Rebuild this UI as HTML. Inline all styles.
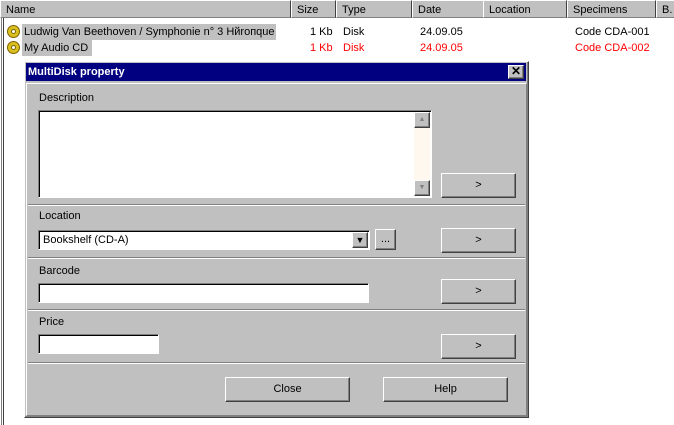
<!DOCTYPE html>
<html><head><meta charset="utf-8"><style>
*{margin:0;padding:0;box-sizing:border-box}
body{width:674px;height:425px;overflow:hidden;background:#fff;font-family:"Liberation Sans",sans-serif;font-size:11px;color:#000;position:relative}
.a{position:absolute}
.hd{position:absolute;top:0;height:18px;background:#c0c0c0;border-top:1px solid #fff;border-left:1px solid #fff;border-right:1px solid #404040;border-bottom:1px solid #808080;padding:3px 0 0 5px;white-space:nowrap;overflow:hidden}
.raised{background:#c0c0c0;border-top:1px solid #fff;border-left:1px solid #fff;border-right:1px solid #404040;border-bottom:1px solid #404040;box-shadow:inset -1px -1px 0 #808080}
.sunk{background:#fff;border-top:1px solid #808080;border-left:1px solid #808080;border-right:1px solid #fff;border-bottom:1px solid #fff;box-shadow:inset 1px 1px 0 #000}
.btn{position:absolute;text-align:center}
.sep{position:absolute;left:28px;width:497px;height:2px;border-top:1px solid #808080;border-bottom:1px solid #fff}
.red{color:#f00}
.cd{position:absolute;width:13px;height:13px;border-radius:50%;background:#d8c020;border:1px solid #806000}
.cd:after{content:"";position:absolute;left:3px;top:3px;width:5px;height:5px;border-radius:50%;background:#fff;border:1px solid #806000;box-sizing:border-box}
</style></head><body>
<div class="hd" style="left:0;width:291px">Name</div>
<div class="hd" style="left:291px;width:45px">Size</div>
<div class="hd" style="left:336px;width:76px">Type</div>
<div class="hd" style="left:412px;width:83px">Date</div>
<div class="hd" style="left:483px;width:84px">Location</div>
<div class="hd" style="left:567px;width:89px">Specimens</div>
<div class="hd" style="left:656px;width:30px">B.</div>
<div class="a" style="left:3px;top:18px;width:1px;height:407px;background:#404040"></div>
<div class="a" style="left:1px;top:18px;width:1px;height:407px;background:#808080"></div>

<div class="cd" style="left:7px;top:25px"></div>
<div class="a" style="left:22px;top:24px;width:254px;height:16px;background:#c0c0c0;padding:2px 0 0 2px">Ludwig Van Beethoven / Symphonie n° 3 Hйroпque</div>
<div class="a" style="left:310px;top:26px">1 Kb</div>
<div class="a" style="left:343px;top:26px">Disk</div>
<div class="a" style="left:420px;top:26px">24.09.05</div>
<div class="a" style="left:575px;top:26px">Code CDA-001</div>
<div class="cd" style="left:7px;top:41px"></div>
<div class="a" style="left:22px;top:40px;width:70px;height:16px;background:#c0c0c0;padding:2px 0 0 2px">My Audio CD</div>
<div class="a red" style="left:310px;top:42px">1 Kb</div>
<div class="a red" style="left:343px;top:42px">Disk</div>
<div class="a red" style="left:420px;top:42px">24.09.05</div>
<div class="a red" style="left:575px;top:42px">Code CDA-002</div>

<div class="a raised" style="left:24px;top:61px;width:505px;height:357px"></div>
<div class="a" style="left:26px;top:63px;width:500px;height:18px;background:#000080;color:#fff;font-weight:bold;padding:3px 0 0 2px">MultiDisk property</div>
<div class="a raised" style="left:508px;top:65px;width:16px;height:14px;text-align:center;line-height:11px;font-weight:bold;font-size:12px">✕</div>
<div class="a" style="left:26px;top:83px;width:501px;height:333px;border-top:1px solid #fff;border-left:1px solid #fff;border-right:1px solid #808080;border-bottom:1px solid #808080"></div>

<div class="a" style="left:39px;top:92px">Description</div>
<div class="a sunk" style="left:38px;top:110px;width:394px;height:88px"></div>
<div class="a" style="left:414px;top:112px;width:16px;height:84px;background:#fff8ee"></div>
<div class="a raised" style="left:414px;top:112px;width:16px;height:16px;color:#808080;font-size:7px;text-align:center;line-height:13px">▲</div>
<div class="a raised" style="left:414px;top:180px;width:16px;height:16px;color:#808080;font-size:7px;text-align:center;line-height:13px">▼</div>
<div class="btn raised" style="left:441px;top:173px;width:75px;height:25px;line-height:23px">&gt;</div>
<div class="sep" style="top:204px"></div>

<div class="a" style="left:39px;top:210px">Location</div>
<div class="a sunk" style="left:38px;top:230px;width:332px;height:20px;padding:3px 0 0 4px">Bookshelf (CD-A)</div>
<div class="a raised" style="left:352px;top:232px;width:16px;height:16px;font-size:9px;text-align:center;line-height:14px">▼</div>
<div class="btn raised" style="left:375px;top:229px;width:21px;height:21px;line-height:19px">...</div>
<div class="btn raised" style="left:441px;top:228px;width:75px;height:25px;line-height:23px">&gt;</div>
<div class="sep" style="top:257px"></div>

<div class="a" style="left:39px;top:265px">Barcode</div>
<div class="a sunk" style="left:38px;top:283px;width:331px;height:20px"></div>
<div class="btn raised" style="left:441px;top:279px;width:75px;height:25px;line-height:23px">&gt;</div>
<div class="sep" style="top:309px"></div>

<div class="a" style="left:39px;top:316px">Price</div>
<div class="a sunk" style="left:38px;top:334px;width:121px;height:20px"></div>
<div class="btn raised" style="left:441px;top:334px;width:75px;height:25px;line-height:23px">&gt;</div>
<div class="sep" style="top:362px"></div>

<div class="btn raised" style="left:225px;top:377px;width:125px;height:25px;line-height:23px">Close</div>
<div class="btn raised" style="left:383px;top:377px;width:125px;height:25px;line-height:23px">Help</div>
</body></html>
